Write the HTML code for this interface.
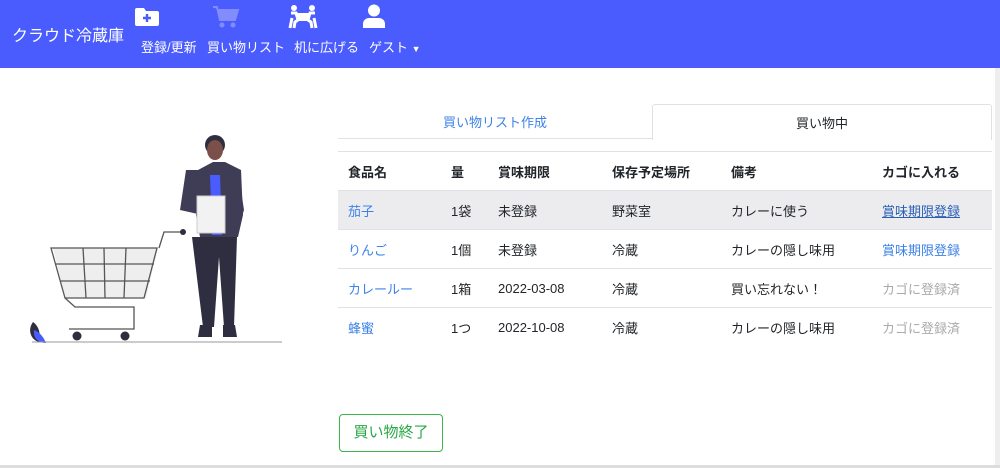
<!DOCTYPE html>
<html><head><meta charset="utf-8"><style>
*{margin:0;padding:0;box-sizing:border-box}
body{width:1000px;height:468px;overflow:hidden;background:#fff;font-family:"Liberation Sans","Noto Sans CJK JP",sans-serif;position:relative;color:#212529}
.nav{position:absolute;left:0;top:0;width:1000px;height:68px;background:#4a5cfd}
.brand{position:absolute;left:12px;top:22px;color:#fff;font-size:16px}
.ni{position:absolute;top:37px;color:#fff;font-size:13px}
.ic{position:absolute}
.tabs{position:absolute;left:338px;top:104px;width:654px;height:36px}
.t1{position:absolute;left:0;top:0;width:314px;height:35px;border-bottom:1px solid #dee2e6;color:#3d82e8;font-size:13px;text-align:center;line-height:37px}
.t2{position:absolute;left:314px;top:0;width:340px;height:36px;border:1px solid #dee2e6;border-bottom:none;font-size:13px;text-align:center;line-height:37px;border-radius:3px 3px 0 0}
table{position:absolute;left:338px;top:151px;width:654px;border-collapse:collapse;font-size:13px}
td,th{height:39px;border-top:1px solid #dee2e6;padding:0 0 0 10px;text-align:left;white-space:nowrap}
th{font-weight:bold;border-bottom:1px solid #dee2e6}
tr.h td{background:#ececef}
.a{color:#3d82e8}.g{color:#aaa}
.btn{position:absolute;left:339px;top:414px;width:104px;height:38px;border:1px solid #3ab54a;border-radius:4px;color:#28a745;font-size:15px;text-align:center;line-height:36px}
</style></head><body>
<div class="nav">
<div class="brand">クラウド冷蔵庫</div>
<svg class="ic" style="left:135px;top:8px" width="24" height="18" viewBox="0 0 24 18"><path d="M0 2a2 2 0 0 1 2-2h7l2 3h11a2 2 0 0 1 2 2v11a2 2 0 0 1-2 2H2a2 2 0 0 1-2-2z" fill="#fff"/><path d="M12 6v8M8 10h8" stroke="#4a5cfd" stroke-width="2.4"/></svg>
<svg class="ic" style="left:212px;top:5px;opacity:.3" width="28" height="24" viewBox="0 0 28 24"><path d="M1 2h4l3 13h15l3-10H7" fill="#fff" stroke="#fff" stroke-width="2"/><circle cx="10" cy="20" r="2.5" fill="#fff"/><circle cx="21" cy="20" r="2.5" fill="#fff"/></svg>
<svg class="ic" style="left:288px;top:5px" width="30" height="24" viewBox="0 0 30 24"><circle cx="6" cy="3" r="3" fill="#fff"/><circle cx="24" cy="3" r="3" fill="#fff"/><rect x="9" y="8" width="12" height="8" fill="#fff"/><path d="M3 8h5l2 7-3 2 -1 6M27 8h-5l-2 7 3 2 1 6M4 13l-2 10M26 13l2 10" stroke="#fff" stroke-width="3" fill="none"/></svg>
<svg class="ic" style="left:363px;top:4px" width="22" height="24" viewBox="0 0 22 24"><circle cx="11" cy="6.5" r="6" fill="#fff"/><path d="M0 24v-4a6 6 0 0 1 6-6h10a6 6 0 0 1 6 6v4z" fill="#fff"/></svg>
<div class="ni" style="left:141px">登録/更新</div>
<div class="ni" style="left:207px">買い物リスト</div>
<div class="ni" style="left:294px">机に広げる</div>
<div class="ni" style="left:369px">ゲスト <span style="font-size:9px">▼</span></div>
</div>
<svg style="position:absolute;left:20px;top:120px" width="280" height="230" viewBox="0 0 280 230">
<path d="M33 128h105l-12 50H45z" fill="#eee"/>
<path d="M31 128h106l-13 50H45zM35 144h99M40 161h90M63 128l3 50M84 128l1 50M106 128l-2 50M45 178l10 9h59v22H49M139 128l5-16h20" fill="none" stroke="#555" stroke-width="1.3"/>
<circle cx="163" cy="112" r="3" fill="#2f2e41"/>
<circle cx="57" cy="216" r="4.5" fill="#2f2e41"/><circle cx="105" cy="216" r="4.5" fill="#2f2e41"/>
<path d="M13 202c6 4 8 12 6 20-8-2-12-12-6-20z" fill="#2f2e41"/><path d="M14 210c6 2 10 8 12 13-8 0-13-5-12-13z" fill="#4a5cfd"/>
<line x1="12" y1="222" x2="262" y2="222" stroke="#999" stroke-width="1"/>
<circle cx="195" cy="25" r="10" fill="#2f2e41"/><ellipse cx="195" cy="30" rx="8" ry="10" fill="#7a5048"/>
<path d="M178 50l15-8h12l16 8 2 45-5 22h-38l-4-22z" fill="#3f3d56"/>
<path d="M190 55h10l2 60h-10z" fill="#4a5cfd"/>
<path d="M160 90l6-40 12 0 0 44zM218 50l6 40-8 25-4-10z" fill="#3f3d56"/>
<path d="M172 117h45l-3 90h-10l-5-70-5 70h-11z" fill="#2f2e41"/>
<path d="M180 205h12v12h-14zM203 205h12l2 12h-14z" fill="#2f2e41"/>
<rect x="177" y="76" width="28" height="37" fill="#f2f2f2" stroke="#ccc"/>
</svg>
<div class="tabs"><div class="t1">買い物リスト作成</div><div class="t2">買い物中</div></div>
<table>
<tr><th style="width:103px">食品名</th><th style="width:47px">量</th><th style="width:114px">賞味期限</th><th style="width:119px">保存予定場所</th><th style="width:151px">備考</th><th>カゴに入れる</th></tr>
<tr class="h"><td class="a">茄子</td><td>1袋</td><td>未登録</td><td>野菜室</td><td>カレーに使う</td><td class="a" style="text-decoration:underline;color:#2b5fb5">賞味期限登録</td></tr>
<tr><td class="a">りんご</td><td>1個</td><td>未登録</td><td>冷蔵</td><td>カレーの隠し味用</td><td class="a">賞味期限登録</td></tr>
<tr><td class="a">カレールー</td><td>1箱</td><td>2022-03-08</td><td>冷蔵</td><td>買い忘れない！</td><td class="g">カゴに登録済</td></tr>
<tr><td class="a">蜂蜜</td><td>1つ</td><td>2022-10-08</td><td>冷蔵</td><td>カレーの隠し味用</td><td class="g">カゴに登録済</td></tr>
</table>
<div class="btn">買い物終了</div>
<div style="position:absolute;left:995px;top:68px;width:5px;height:400px;background:#eee"></div>
<div style="position:absolute;left:0;top:465px;width:1000px;height:3px;background:#ddd"></div>
</body></html>
